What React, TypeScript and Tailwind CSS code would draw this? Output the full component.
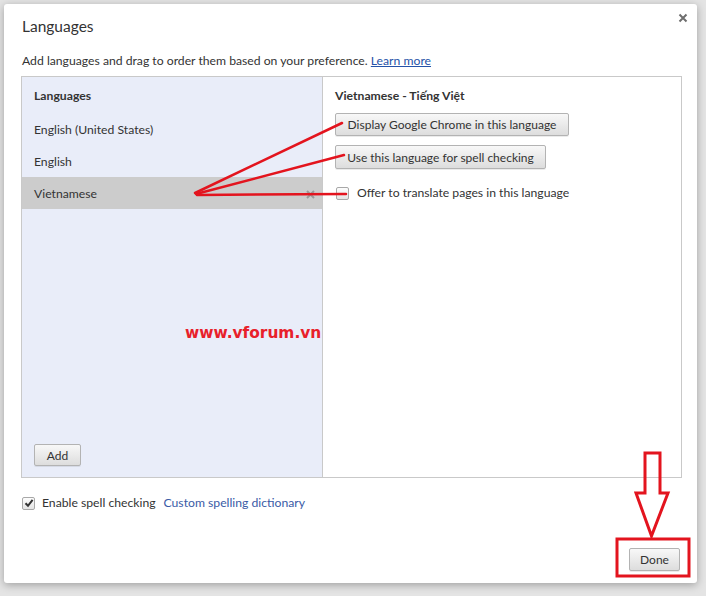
import React from "react";

function Btn({ children, className = "" }: { children: React.ReactNode; className?: string }) {
  return (
    <button
      className={
        "flex items-center justify-center whitespace-nowrap rounded-[2px] border border-[#b3b3b3] bg-gradient-to-b from-[#f8f8f8] to-[#dddddd] px-[10px] pt-[1px] text-[12px] text-[#333] shadow-[0_1px_0_rgba(0,0,0,0.08)] " +
        className
      }
    >
      {children}
    </button>
  );
}

function Check({ checked = false }: { checked?: boolean }) {
  return (
    <span className="flex h-[13px] w-[13px] shrink-0 items-center justify-center rounded-[2px] border border-[#a8a8a8] bg-gradient-to-b from-[#fdfdfd] to-[#e4e4e4]">
      {checked && (
        <svg width="10" height="10" viewBox="0 0 10 10">
          <path d="M1.5 5.2 L4 7.8 L8.6 1.8" fill="none" stroke="#333" strokeWidth="2" />
        </svg>
      )}
    </span>
  );
}

export default function App() {
  return (
    <div className="relative h-[596px] w-[706px] overflow-hidden bg-[#e4e4e4] font-['Lato','Segoe_UI',sans-serif] text-[#333]">
      <div className="relative ml-[4px] mt-[4px] flex h-[579px] w-[693px] flex-col rounded-[3px] bg-white pl-[17px] pr-[15px] pt-[12px] shadow-[0_2px_8px_rgba(0,0,0,0.3)]">
        <svg className="absolute right-[9px] top-[9px]" width="10" height="10" viewBox="0 0 10 10">
          <path d="M1.5 1.5 L8.5 8.5 M8.5 1.5 L1.5 8.5" stroke="#6e6e6e" strokeWidth="2" />
        </svg>
        <div className="pl-[1px] text-[15.5px] leading-[20px]">Languages</div>
        <div className="mt-[17px] pl-[1px] text-[12.2px] leading-[16px]">
          Add languages and drag to order them based on your preference.{" "}
          <span className="text-[#2552a8] underline">Learn more</span>
        </div>

        <div className="mt-[7px] flex h-[402px] border border-[#c9c9c9]">
          <div className="flex w-[301px] flex-col border-r border-[#c9c9c9] bg-[#e9edf9]">
            <div className="flex h-[36px] items-center pl-[12px] pt-[3px] text-[12.2px] font-bold">Languages</div>
            <div className="flex h-[32px] items-center pl-[12px] pt-[2px] text-[12.2px]">English (United States)</div>
            <div className="flex h-[32px] items-center pl-[12px] pt-[2px] text-[12.2px]">English</div>
            <div className="flex h-[32px] items-center justify-between bg-[#cccccc] pl-[12px] pr-[7px] pt-[2px] text-[12.2px]">
              <span>Vietnamese</span>
              <svg width="9" height="9" viewBox="0 0 9 9">
                <path d="M1 1 L8 8 M8 1 L1 8" stroke="#9a9a9a" strokeWidth="2" />
              </svg>
            </div>
            <Btn className="mb-[11px] ml-[12px] mt-auto h-[22px] w-[47px]">Add</Btn>
          </div>
          <div className="flex flex-1 flex-col items-start pl-[12px]">
            <div className="flex h-[36px] items-center pt-[3px] text-[12.2px] font-bold">Vietnamese - Tiếng Việt</div>
            <Btn className="h-[23px] w-[234px]">Display Google Chrome in this language</Btn>
            <Btn className="mt-[9px] h-[24px] w-[211px]">Use this language for spell checking</Btn>
            <div className="ml-[1px] mt-[16px] flex h-[16px] items-center gap-[8px] text-[12.2px]">
              <Check />
              <span>Offer to translate pages in this language</span>
            </div>
          </div>
        </div>

        <div className="mt-[17px] flex h-[16px] items-center pl-[1px] text-[12.2px]">
          <Check checked />
          <span className="ml-[7px]">Enable spell checking</span>
          <span className="ml-[8px] text-[#3a5ba6]">Custom spelling dictionary</span>
        </div>

        <Btn className="mb-[12px] mr-[2px] mt-auto h-[23px] w-[51px] self-end">Done</Btn>
      </div>

      <div className="absolute left-[185px] top-[323px] font-['DejaVu_Sans',sans-serif] text-[15.4px] font-bold leading-[20px] text-[#e8202a]">
        www.vforum.vn
      </div>

      <svg className="pointer-events-none absolute inset-0" width="706" height="596" viewBox="0 0 706 596">
        <g stroke="#e3141e" strokeWidth="2.5" fill="none" strokeLinecap="round">
          <path d="M195 193 L342 123" />
          <path d="M196 194 L344 155" />
          <path d="M197 195 L346 194" />
        </g>
        <g stroke="#e3141e" strokeWidth="3" fill="none">
          <path d="M645 453 L660 453 L660 493 L668 493 L651.5 536 L636 493 L645 493 Z" />
          <rect x="617" y="539" width="72" height="37" />
        </g>
      </svg>
    </div>
  );
}
